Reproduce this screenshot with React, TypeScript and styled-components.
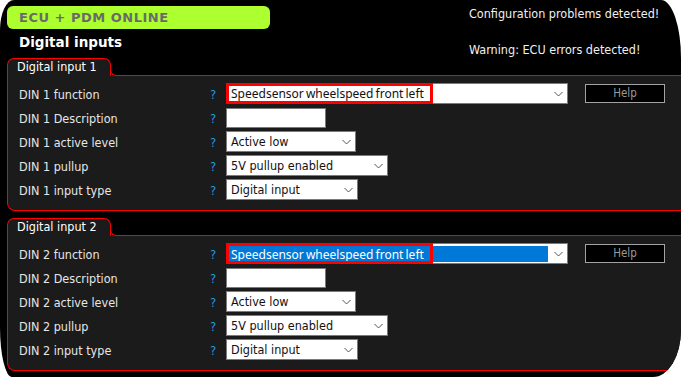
import React from "react";
import styled, { createGlobalStyle } from "styled-components";

const GlobalStyle = createGlobalStyle`
  html, body {
    margin: 0;
    padding: 0;
    background: #fff;
  }
  * {
    box-sizing: border-box;
  }
`;

const UI_FONT = `"DejaVu Sans Condensed", "DejaVu Sans", sans-serif`;

const Window = styled.div`
  width: 681px;
  height: 377px;
  background: #000;
  overflow: hidden;
  border-radius: 14px 20px 28px 12px / 30px 58px 47px 50px;
  padding: 6px 0 0 7px;
  font-family: ${UI_FONT};
  font-size: 12px;
  color: #e8e8e8;
`;

const Header = styled.header`
  display: grid;
  grid-template-columns: 462px 1fr;
  height: 52px;
`;

const HeaderLeft = styled.div`
  display: flex;
  flex-direction: column;
`;

const StatusBar = styled.div`
  width: 263px;
  height: 23px;
  background: #adff2f;
  border-radius: 6px;
  padding-left: 12px;
  display: flex;
  align-items: center;
  font-family: "DejaVu Sans", sans-serif;
  font-weight: bold;
  font-size: 13px;
  letter-spacing: 0.5px;
  color: #6a6a6a;
`;

const Title = styled.h1`
  margin: 5px 0 0 12px;
  font-family: "DejaVu Sans", sans-serif;
  font-weight: bold;
  font-size: 13.5px;
  line-height: 17px;
  color: #fff;
`;

const Messages = styled.div`
  display: flex;
  flex-direction: column;
  gap: 21px;
  font-size: 12.5px;
  line-height: 15px;
  color: #f0f0f0;
`;

const Section = styled.section`
  margin-right: -20px;
  & + & {
    margin-top: 7px;
  }
`;

const TabRow = styled.div`
  display: flex;
  height: 18px;
`;

const Tab = styled.div`
  width: 104px;
  border: 1px solid #ff0000;
  border-bottom: none;
  border-radius: 7px 7px 0 0;
  background: #1b1b1b;
  padding-left: 9px;
  font-size: 12.5px;
  line-height: 16px;
  color: #fff;
`;

const TabRest = styled.div`
  flex: 1;
  display: flex;
  align-items: flex-end;
  margin-left: -1px;

  &::before {
    content: "";
    width: 6px;
    height: 6px;
    border-left: 1px solid #ff0000;
    border-bottom: 1px solid #ff0000;
    border-bottom-left-radius: 6px;
  }

  &::after {
    content: "";
    flex: 1;
    border-bottom: 1px solid #ff0000;
  }
`;

const Panel = styled.div`
  background: #1b1b1b;
  border-left: 1px solid #ff0000;
  border-bottom: 1px solid #ff0000;
  border-bottom-left-radius: 8px;
  padding: 7px 0 10px 11px;
  display: flex;
  flex-direction: column;
  gap: 3px;
`;

const Row = styled.div`
  display: grid;
  grid-template-columns: 191px 16px auto 1fr;
  align-items: center;
  height: 21px;
`;

const Label = styled.span`
  padding-top: 2px;
  font-size: 12.5px;
  color: #e6e6e6;
`;

const Hint = styled.span`
  padding-top: 2px;
  font-size: 13px;
  color: #1f9ad6;
`;

const Controls = styled.div`
  display: flex;
  align-items: center;
  gap: 17px;
`;

const SelectBox = styled.div<{ $width: number }>`
  position: relative;
  width: ${(p) => p.$width}px;
  height: 21px;
  background: #fff;
  border: 1px solid #7a7a7a;
  display: flex;
  align-items: stretch;
  color: #111;
  font-size: 12.5px;
`;

const Value = styled.span<{ $selected?: boolean; $wide?: boolean }>`
  flex: 1;
  display: flex;
  align-items: center;
  margin: ${(p) => (p.$selected ? "2px 0 1px 2px" : "0")};
  padding-left: ${(p) => (p.$selected ? "2px" : "4px")};
  background: ${(p) => (p.$selected ? "#0078d7" : "transparent")};
  color: ${(p) => (p.$selected ? "#fff" : "#111")};
  font-family: ${(p) => (p.$wide ? `"Noto Sans", sans-serif` : UI_FONT)};
  font-size: ${(p) => (p.$wide ? "12px" : "12.5px")};
  word-spacing: ${(p) => (p.$wide ? "-1px" : "0")};
  white-space: nowrap;
`;

const Chevron = styled.span`
  width: 19px;
  display: flex;
  align-items: center;
  justify-content: center;
  padding-left: 1px;
`;

const Marker = styled.span<{ $width: number }>`
  position: absolute;
  left: -1px;
  top: -1px;
  bottom: -1px;
  width: ${(p) => p.$width}px;
  border: 3px solid #ff0000;
  pointer-events: none;
`;

const TextField = styled.div`
  width: 100px;
  height: 20px;
  background: #fff;
  border: 1px solid #7a7a7a;
`;

const HelpButton = styled.button`
  width: 80px;
  height: 19px;
  background: #000;
  border: 1px solid #a3a3a3;
  padding: 0;
  display: flex;
  justify-content: center;
  align-items: center;
  font-family: ${UI_FONT};
  font-size: 11.5px;
  line-height: 13px;
  color: #9a9a9a;
  cursor: pointer;
`;

const ChevronIcon = () => (
  <svg width="9" height="6" viewBox="0 0 9 6">
    <polyline points="0.5,1 4.5,5 8.5,1" fill="none" stroke="#555" strokeWidth="1" />
  </svg>
);

interface SelectProps {
  width: number;
  value: string;
  selected?: boolean;
  marked?: boolean;
}

const Select = ({ width, value, selected, marked }: SelectProps) => (
  <SelectBox $width={width}>
    <Value $selected={selected} $wide={marked}>
      {value}
    </Value>
    <Chevron>
      <ChevronIcon />
    </Chevron>
    {marked && <Marker $width={207} />}
  </SelectBox>
);

interface InputGroupProps {
  index: number;
  selected?: boolean;
}

const InputGroup = ({ index, selected }: InputGroupProps) => (
  <Section>
    <TabRow>
      <Tab>Digital input {index}</Tab>
      <TabRest />
    </TabRow>
    <Panel>
      <Row>
        <Label>DIN {index} function</Label>
        <Hint>?</Hint>
        <Controls>
          <Select
            width={342}
            value="Speedsensor wheelspeed front left"
            selected={selected}
            marked
          />
          <HelpButton>Help</HelpButton>
        </Controls>
      </Row>
      <Row>
        <Label>DIN {index} Description</Label>
        <Hint>?</Hint>
        <TextField />
      </Row>
      <Row>
        <Label>DIN {index} active level</Label>
        <Hint>?</Hint>
        <Select width={130} value="Active low" />
      </Row>
      <Row>
        <Label>DIN {index} pullup</Label>
        <Hint>?</Hint>
        <Select width={162} value="5V pullup enabled" />
      </Row>
      <Row>
        <Label>DIN {index} input type</Label>
        <Hint>?</Hint>
        <Select width={132} value="Digital input" />
      </Row>
    </Panel>
  </Section>
);

export default function App() {
  return (
    <>
      <GlobalStyle />
      <Window>
        <Header>
          <HeaderLeft>
            <StatusBar>ECU + PDM ONLINE</StatusBar>
            <Title>Digital inputs</Title>
          </HeaderLeft>
          <Messages>
            <span>Configuration problems detected!</span>
            <span>Warning: ECU errors detected!</span>
          </Messages>
        </Header>
        <InputGroup index={1} />
        <InputGroup index={2} selected />
      </Window>
    </>
  );
}
